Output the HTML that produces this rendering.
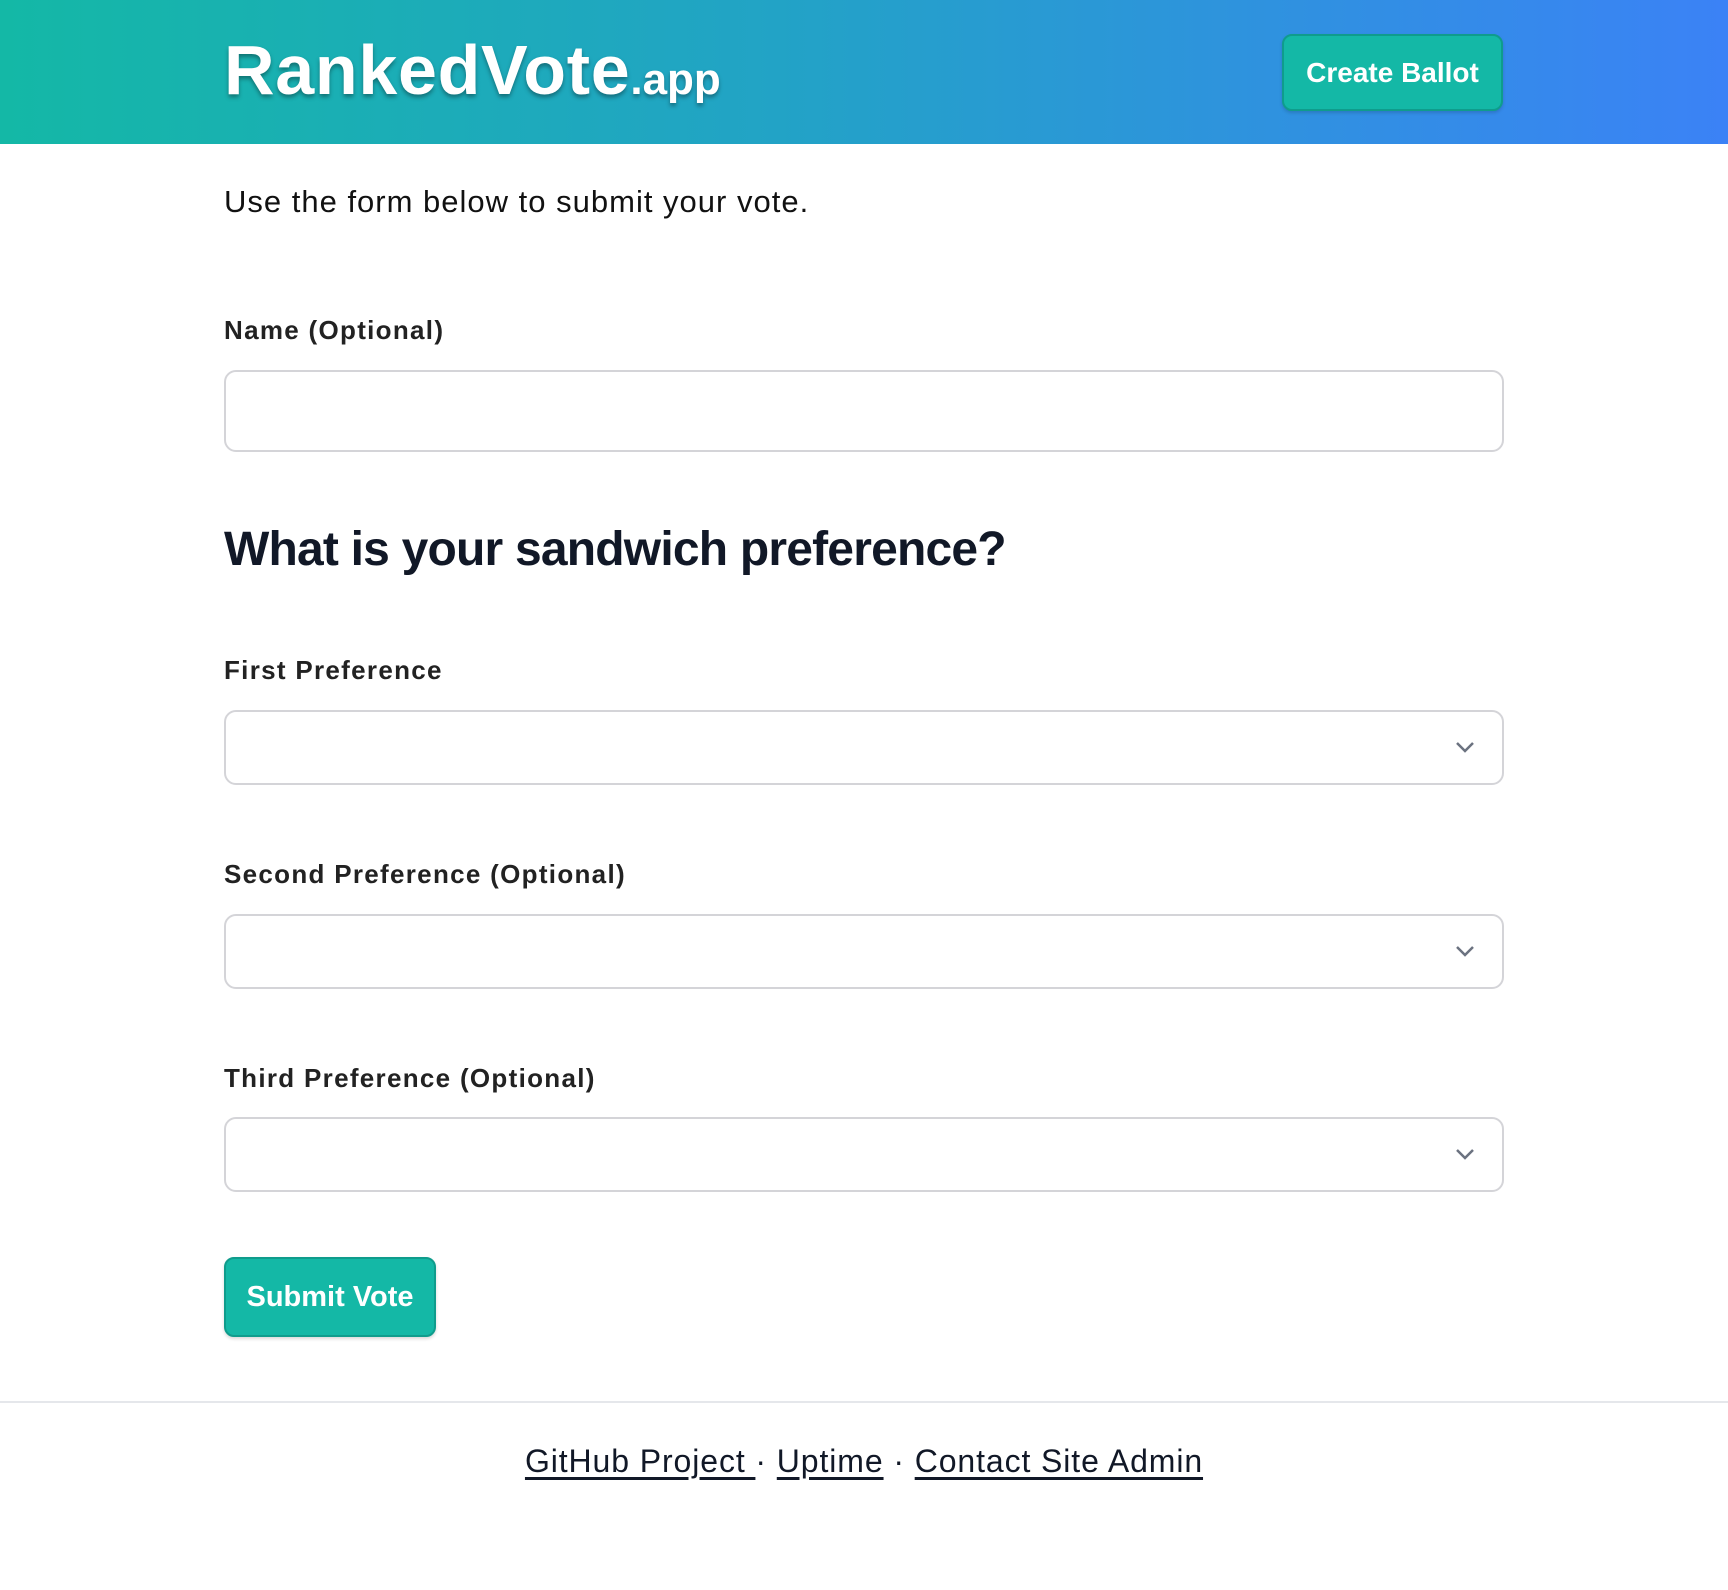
<!DOCTYPE html>
<html><head><meta charset="utf-8"><style>
*{box-sizing:border-box;margin:0;padding:0}
body{width:1728px;height:1590px;background:#fff;font-family:"Liberation Sans",sans-serif;color:#111827;position:relative;overflow:hidden}
.hdr{position:absolute;left:0;top:0;width:1728px;height:144px;background:linear-gradient(90deg,#14b8a6,#22a3c6 45%,#3b82f6)}
.logo{position:absolute;left:224px;top:30px;color:#fff;font-weight:700;font-size:70px;letter-spacing:0.7px;text-shadow:0 3px 4px rgba(0,0,0,.35);white-space:nowrap}
.logo span{font-size:44px;letter-spacing:0}
.btn{position:absolute;background:#14b8a6;border:2px solid #0f9c8c;border-radius:10px;color:#fff;font-weight:700;display:flex;align-items:center;justify-content:center;box-shadow:0 2px 3px rgba(0,0,0,.15)}
.t{position:absolute;left:224px;white-space:nowrap}
.lbl{font-size:26px;font-weight:700;color:#222;letter-spacing:1.3px}
.box{position:absolute;left:224px;width:1280px;border:2px solid #d4d4d8;border-radius:12px;background:#fff}
.chev{position:absolute;right:26px;top:50%;margin-top:-9px}
.foot{position:absolute;left:0;width:1728px;top:1401px;border-top:2px solid #e5e7eb}
.links{position:absolute;top:1443px;left:0;width:1728px;text-align:center;font-size:32px;color:#111827;white-space:nowrap;letter-spacing:0.9px}
.links a{color:#111827;text-decoration:underline;text-underline-offset:5px}
</style></head><body>
<div class="hdr">
<div class="logo">RankedVote<span>.app</span></div>
<div class="btn" style="left:1282px;top:34px;width:221px;height:77px;font-size:28px">Create Ballot</div>
</div>
<div class="t" style="top:184px;font-size:31px;color:#111;letter-spacing:1px">Use the form below to submit your vote.</div>
<div class="t lbl" style="top:315px">Name (Optional)</div>
<div class="box" style="top:370px;height:82px"></div>
<div class="t" style="top:522px;font-size:48px;font-weight:700;color:#111827;letter-spacing:-0.8px">What is your sandwich preference?</div>
<div class="t lbl" style="top:655px">First Preference</div>
<div class="box" style="top:710px;height:75px"><svg class="chev" width="22" height="16" viewBox="0 0 22 16"><path d="M3 4l8 8 8-8" fill="none" stroke="#6b7280" stroke-width="2.5"/></svg></div>
<div class="t lbl" style="top:859px">Second Preference (Optional)</div>
<div class="box" style="top:914px;height:75px"><svg class="chev" width="22" height="16" viewBox="0 0 22 16"><path d="M3 4l8 8 8-8" fill="none" stroke="#6b7280" stroke-width="2.5"/></svg></div>
<div class="t lbl" style="top:1063px">Third Preference (Optional)</div>
<div class="box" style="top:1117px;height:75px"><svg class="chev" width="22" height="16" viewBox="0 0 22 16"><path d="M3 4l8 8 8-8" fill="none" stroke="#6b7280" stroke-width="2.5"/></svg></div>
<div class="btn" style="left:224px;top:1257px;width:212px;height:80px;font-size:29px">Submit Vote</div>
<div class="foot"></div>
<div class="links"><a>GitHub Project </a> · <a>Uptime</a> · <a>Contact Site Admin</a></div>
</body></html>
